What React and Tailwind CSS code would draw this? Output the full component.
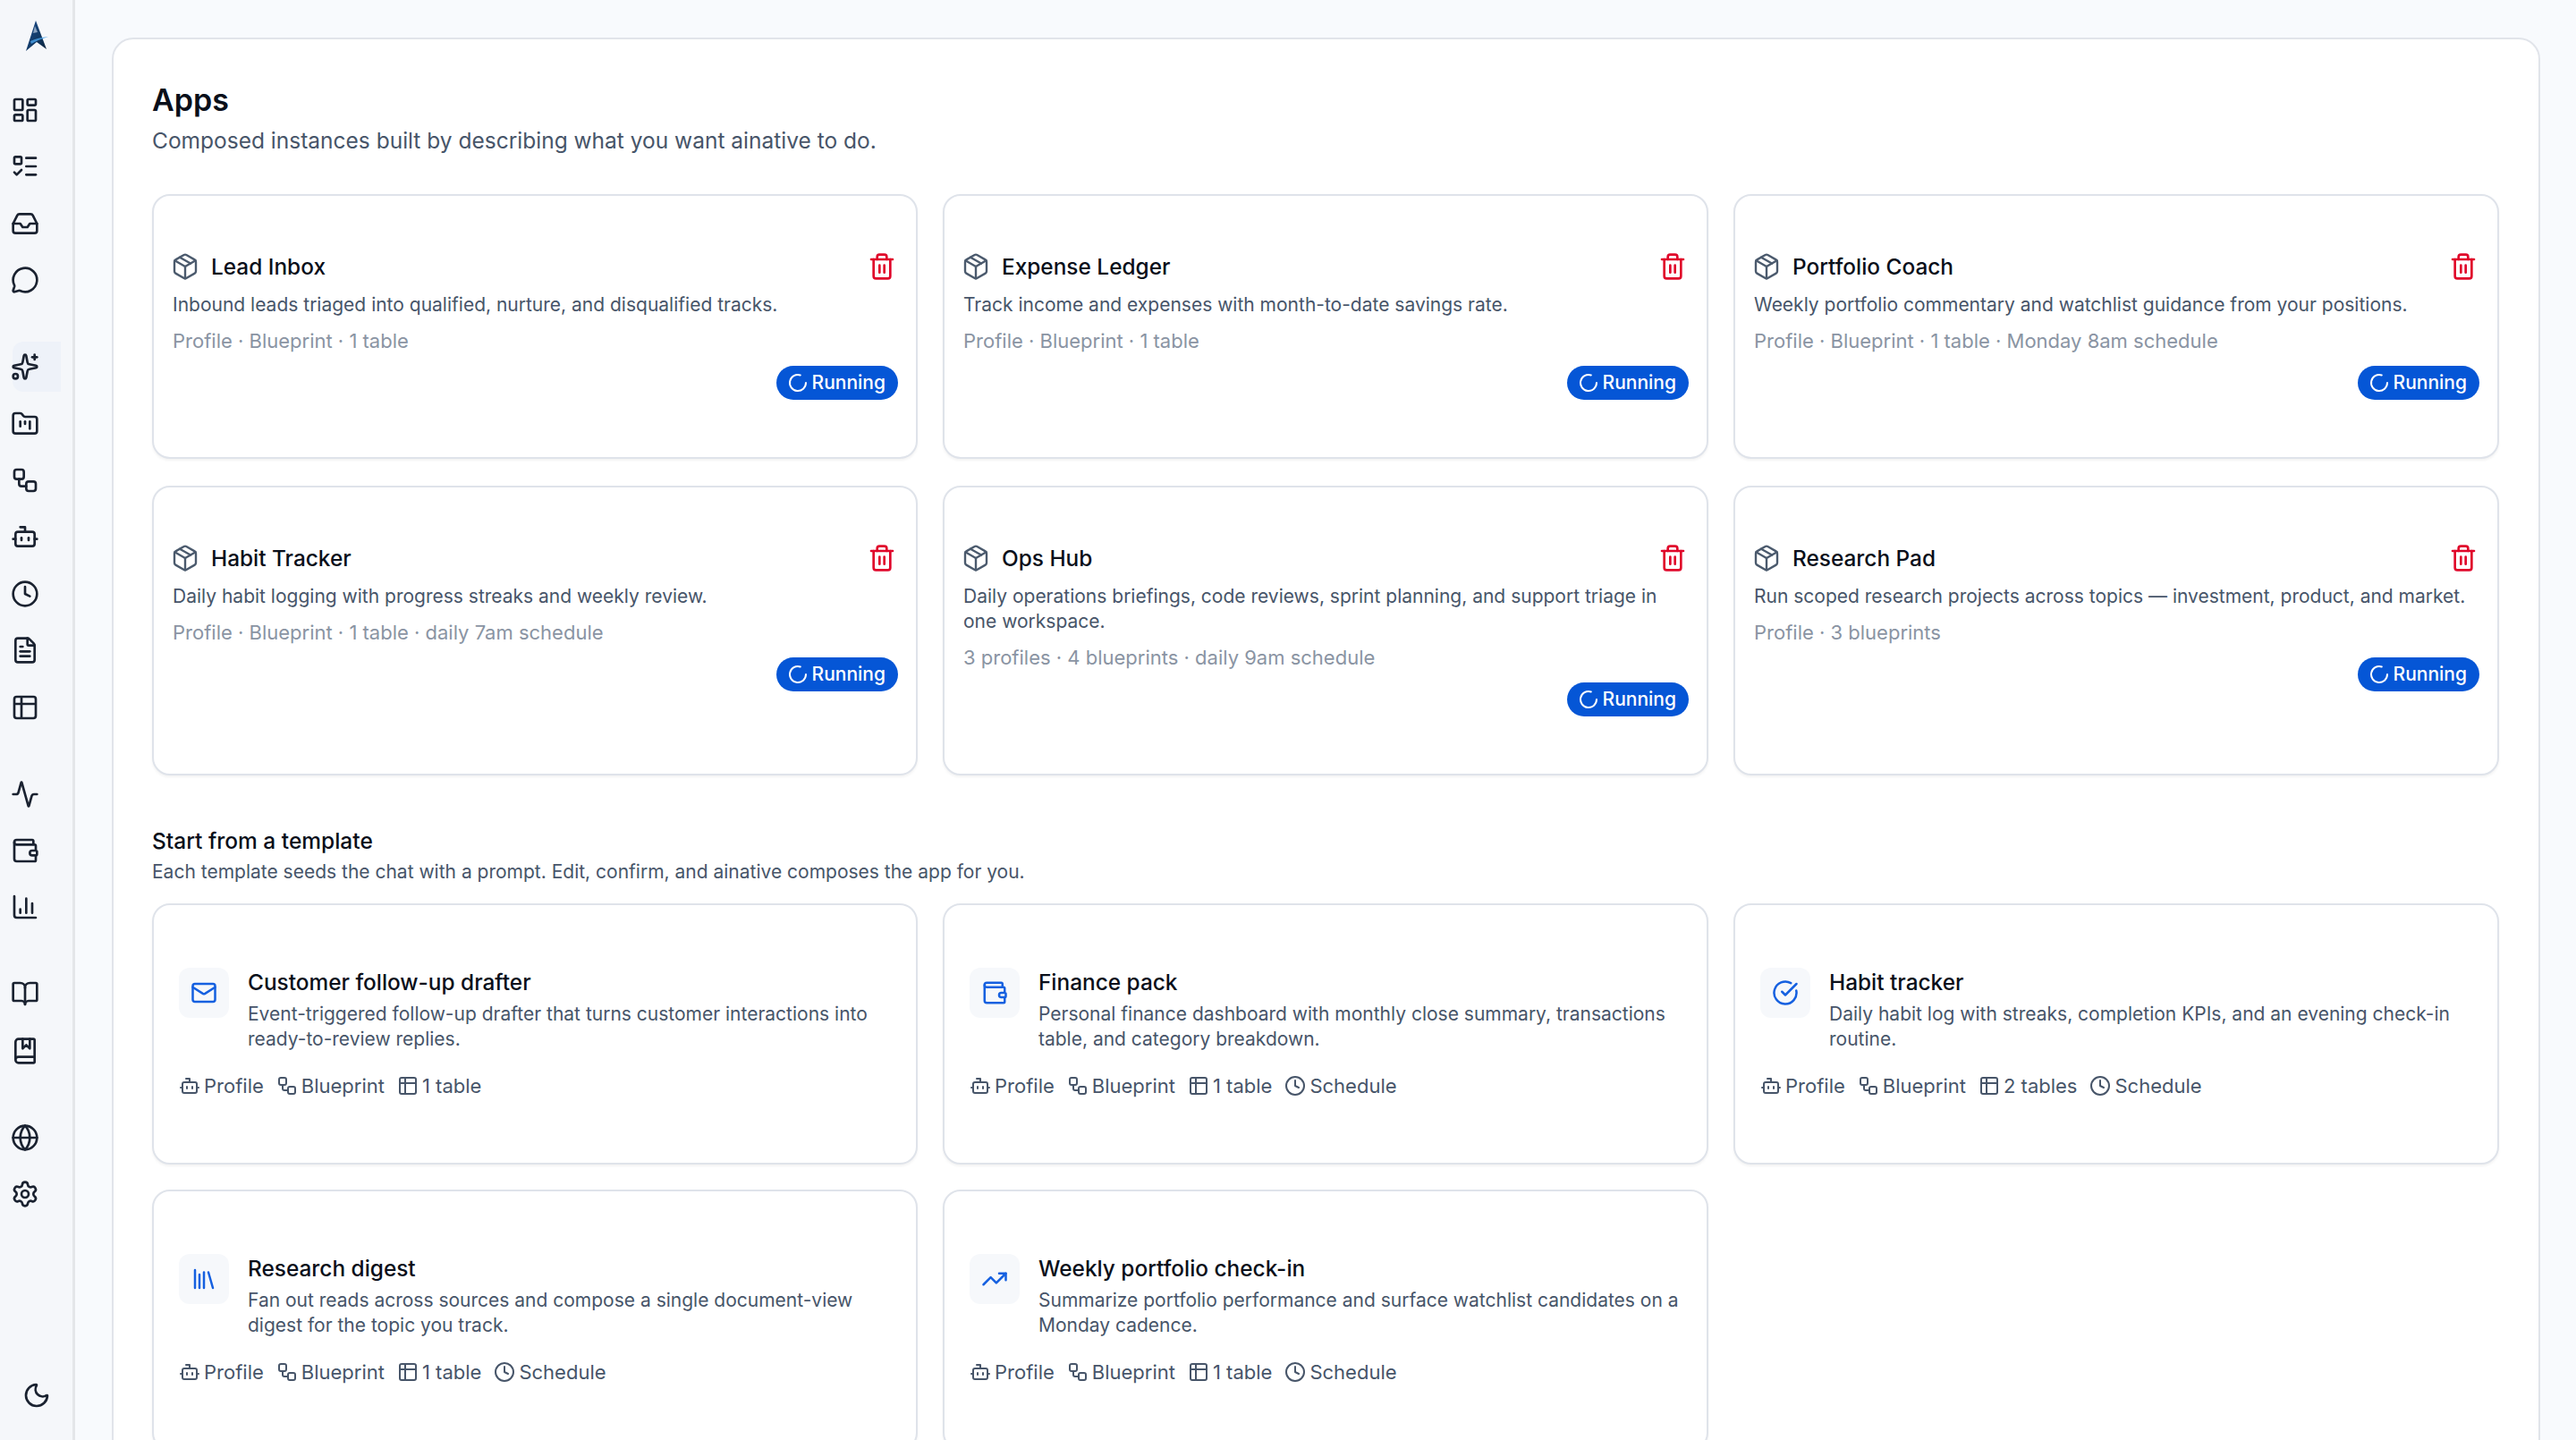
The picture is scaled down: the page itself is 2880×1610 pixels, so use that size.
import {
  Activity, Bot, BookMarked, BookOpen, ChartColumn, CircleCheckBig, Clock, FileText, FolderKanban, Globe, Inbox,
  LayoutDashboard, Library, ListTodo, LoaderCircle, Mail, MessageCircle, Moon, Package, Settings, Sparkles,
  Table2, Trash2, TrendingUp, Wallet, Workflow,
} from 'lucide-react'

const NAV_GROUPS = [
  [LayoutDashboard, ListTodo, Inbox, MessageCircle],
  [Sparkles, FolderKanban, Workflow, Bot, Clock, FileText, Table2],
  [Activity, Wallet, ChartColumn],
  [BookOpen, BookMarked],
  [Globe, Settings],
]

const APPS = [
  { name: 'Lead Inbox', desc: 'Inbound leads triaged into qualified, nurture, and disqualified tracks.', meta: 'Profile · Blueprint · 1 table' },
  { name: 'Expense Ledger', desc: 'Track income and expenses with month-to-date savings rate.', meta: 'Profile · Blueprint · 1 table' },
  { name: 'Portfolio Coach', desc: 'Weekly portfolio commentary and watchlist guidance from your positions.', meta: 'Profile · Blueprint · 1 table · Monday 8am schedule' },
  { name: 'Habit Tracker', desc: 'Daily habit logging with progress streaks and weekly review.', meta: 'Profile · Blueprint · 1 table · daily 7am schedule' },
  { name: 'Ops Hub', desc: 'Daily operations briefings, code reviews, sprint planning, and support triage in one workspace.', meta: '3 profiles · 4 blueprints · daily 9am schedule' },
  { name: 'Research Pad', desc: 'Run scoped research projects across topics — investment, product, and market.', meta: 'Profile · 3 blueprints' },
]

const TEMPLATES = [
  { name: 'Customer follow-up drafter', icon: Mail, desc: 'Event-triggered follow-up drafter that turns customer interactions into ready-to-review replies.', tables: '1 table', schedule: false },
  { name: 'Finance pack', icon: Wallet, desc: 'Personal finance dashboard with monthly close summary, transactions table, and category breakdown.', tables: '1 table', schedule: true },
  { name: 'Habit tracker', icon: CircleCheckBig, desc: 'Daily habit log with streaks, completion KPIs, and an evening check-in routine.', tables: '2 tables', schedule: true },
  { name: 'Research digest', icon: Library, desc: 'Fan out reads across sources and compose a single document-view digest for the topic you track.', tables: '1 table', schedule: true },
  { name: 'Weekly portfolio check-in', icon: TrendingUp, desc: 'Summarize portfolio performance and surface watchlist candidates on a Monday cadence.', tables: '1 table', schedule: true },
]

function Logo() {
  return (
    <svg viewBox="0 0 28 36" className="w-7 h-9">
      <defs>
        <linearGradient id="logoFill" x1="0" y1="0" x2="1" y2="1">
          <stop offset="0" stopColor="#1d4e8f" />
          <stop offset="0.55" stopColor="#123a66" />
          <stop offset="1" stopColor="#0b2238" />
        </linearGradient>
      </defs>
      <path d="M13 1 L25 33 L14 25 L2 35 Z" fill="url(#logoFill)" />
      <path d="M7 24 Q15 20 27 19 Q17 22 8 27 Z" fill="#4aa3e8" opacity="0.8" />
      <path d="M12 7 L15 14 L10 15 Z" fill="#dbe7f5" opacity="0.6" />
    </svg>
  )
}

function Sidebar() {
  return (
    <aside className="w-[84px] h-full shrink-0 flex flex-col bg-[#f5f7fa] border-r-[3px] border-[#e4e6e9]">
      <div className="h-[95px] pl-[27px] pt-[22px] shrink-0">
        <Logo />
      </div>
      <nav className="flex flex-col gap-[41px] pl-[14px]">
        {NAV_GROUPS.map((group, i) => (
          <div key={i} className="flex flex-col gap-[7.4px]">
            {group.map((Icon, j) => (
              <div key={j} className={`w-[54px] h-14 flex items-center rounded-l-xl ${Icon === Sparkles ? 'bg-[#eef2f9]' : ''}`}>
                <Icon size={32} strokeWidth={2} className="ml-[-2px] text-[#1a2230]" />
              </div>
            ))}
          </div>
        ))}
      </nav>
      <div className="mt-auto pb-[34px] flex justify-center">
        <Moon size={32} strokeWidth={2} className="text-[#1a2230]" />
      </div>
    </aside>
  )
}

function AppCard({ app }) {
  return (
    <div className="flex flex-col bg-white border-2 border-[#dfe3ea] rounded-[20px] px-5 pt-[62px] pb-16 shadow-[0_2px_3px_rgba(0,0,0,0.05)]">
      <div className="flex items-center justify-between">
        <div className="flex items-center gap-[13px]">
          <Package size={32} strokeWidth={1.8} className="ml-[-1px] text-[#4b5a6d]" />
          <h3 className="text-[24.4px] leading-[34px] font-medium text-[#0a0f1a]">{app.name}</h3>
        </div>
        <Trash2 size={32} strokeWidth={2} className="mr-[2px] text-[#e0062a]" />
      </div>
      <p className="mt-[12px] ml-[1px] text-[21px] leading-[28px] text-[#475569]">{app.desc}</p>
      <p className="mt-[10px] ml-[1px] text-[22px] leading-[32px] text-[#8a94a3]">{app.meta}</p>
      <div className="mt-[12px] flex justify-end">
        <span className="h-[38px] flex items-center gap-1 pl-3 pr-[14px] rounded-full bg-[#0556d6] text-white text-[21px] font-medium">
          <LoaderCircle size={24} strokeWidth={2} />
          Running
        </span>
      </div>
    </div>
  )
}

function MetaItem({ icon: Icon, children }) {
  return (
    <span className="flex items-center gap-1">
      <Icon size={24} strokeWidth={2} />
      {children}
    </span>
  )
}

function TemplateCard({ t }) {
  const Icon = t.icon
  return (
    <div className="bg-white border-2 border-[#dfe3ea] rounded-[20px] px-7 py-[70px] shadow-[0_2px_3px_rgba(0,0,0,0.05)]">
      <div className="flex items-start gap-[21px]">
        <div className="w-14 h-14 shrink-0 flex items-center justify-center rounded-xl bg-[#f6f8fb]">
          <Icon size={30} strokeWidth={2} className="text-[#1560e0]" />
        </div>
        <div className="min-w-0">
          <h3 className="text-[24.4px] leading-[32px] font-medium text-[#0a0f1a]">{t.name}</h3>
          <p className="mt-[6px] text-[21px] leading-[28px] text-[#475569]">{t.desc}</p>
        </div>
      </div>
      <div className="mt-[22px] flex items-center gap-[14px] text-[22px] leading-[32px] text-[#475569]">
        <MetaItem icon={Bot}>Profile</MetaItem>
        <MetaItem icon={Workflow}>Blueprint</MetaItem>
        <MetaItem icon={Table2}>{t.tables}</MetaItem>
        {t.schedule && <MetaItem icon={Clock}>Schedule</MetaItem>}
      </div>
    </div>
  )
}

export default function App() {
  return (
    <div className="w-screen h-screen flex overflow-hidden bg-[#f8fafd] font-[Inter,sans-serif]">
      <Sidebar />
      <main className="flex-1 min-w-0 pl-[41px] pr-10 pt-[42px]">
        <div className="bg-white border-2 border-[#e1e4ea] rounded-3xl pl-[43px] pr-[44px] pt-[44px]">
          <h1 className="text-[34px] leading-[48px] font-semibold text-[#0a0f1a]">Apps</h1>
          <p className="mt-[3px] text-[24.5px] leading-[36px] text-[#475569]">Composed instances built by describing what you want ainative to do.</p>
          <div className="mt-[42px] grid grid-cols-3 gap-x-7 gap-y-[30px]">
            {APPS.map((app) => <AppCard key={app.name} app={app} />)}
          </div>
          <h2 className="mt-[55px] text-[24.5px] leading-[36px] font-medium text-[#0a0f1a]">Start from a template</h2>
          <p className="mt-[1px] text-[21px] leading-[32px] text-[#475569]">Each template seeds the chat with a prompt. Edit, confirm, and ainative composes the app for you.</p>
          <div className="mt-[19px] pb-[44px] grid grid-cols-3 gap-7">
            {TEMPLATES.map((t) => <TemplateCard key={t.name} t={t} />)}
          </div>
        </div>
      </main>
    </div>
  )
}
